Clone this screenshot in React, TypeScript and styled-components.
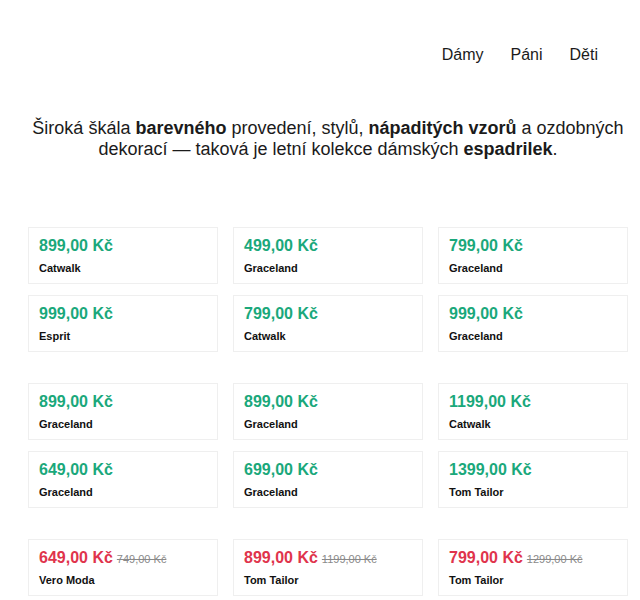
import React from "react";
import styled, { createGlobalStyle } from "styled-components";

const Global = createGlobalStyle`
  html, body { margin: 0; padding: 0; background: #fff; }
  body { font-family: "Liberation Sans", Arial, sans-serif; color: #1b1b1b; }
`;

const Page = styled.div`
  width: 600px;
  margin-left: 28px;
`;

const Nav = styled.nav`
  display: flex;
  justify-content: flex-end;
  gap: 27px;
  padding: 46px 30px 0 0;
`;

const NavLink = styled.a`
  font-size: 16px;
  line-height: 18px;
  color: #1b1b1b;
  text-decoration: none;
`;

const Intro = styled.p`
  margin: 54px 0 0;
  text-align: center;
  font-size: 18px;
  line-height: 21px;
  color: #1b1b1b;
  b { font-weight: 700; }
`;

const Groups = styled.div`
  margin-top: 67px;
  display: flex;
  flex-direction: column;
  gap: 31px;
`;

const Grid = styled.div`
  display: grid;
  grid-template-columns: repeat(3, 190px);
  column-gap: 15px;
  row-gap: 11px;
`;

const Card = styled.div`
  border: 1px solid #efefef;
  padding: 9px 10px 8px;
  display: flex;
  flex-direction: column;
  gap: 7px;
`;

const PriceRow = styled.div`
  display: flex;
  align-items: baseline;
  gap: 4px;
  height: 18px;
`;

const Price = styled.span<{ $sale?: boolean }>`
  font-size: 16px;
  line-height: 18px;
  font-weight: 700;
  color: ${(p) => (p.$sale ? "#e0344c" : "#1aa87b")};
`;

const OldPrice = styled.span`
  font-size: 11px;
  color: #8a8a8a;
  text-decoration: line-through;
`;

const Brand = styled.div`
  font-size: 11px;
  line-height: 13px;
  font-weight: 700;
  color: #111;
`;

type Item = { price: string; brand: string; old?: string };

const groups: Item[][] = [
  [
    { price: "899,00 Kč", brand: "Catwalk" },
    { price: "499,00 Kč", brand: "Graceland" },
    { price: "799,00 Kč", brand: "Graceland" },
    { price: "999,00 Kč", brand: "Esprit" },
    { price: "799,00 Kč", brand: "Catwalk" },
    { price: "999,00 Kč", brand: "Graceland" },
  ],
  [
    { price: "899,00 Kč", brand: "Graceland" },
    { price: "899,00 Kč", brand: "Graceland" },
    { price: "1199,00 Kč", brand: "Catwalk" },
    { price: "649,00 Kč", brand: "Graceland" },
    { price: "699,00 Kč", brand: "Graceland" },
    { price: "1399,00 Kč", brand: "Tom Tailor" },
  ],
  [
    { price: "649,00 Kč", brand: "Vero Moda", old: "749,00 Kč" },
    { price: "899,00 Kč", brand: "Tom Tailor", old: "1199,00 Kč" },
    { price: "799,00 Kč", brand: "Tom Tailor", old: "1299,00 Kč" },
  ],
];

export default function App() {
  return (
    <>
      <Global />
      <Page>
        <Nav>
          <NavLink href="#">Dámy</NavLink>
          <NavLink href="#">Páni</NavLink>
          <NavLink href="#">Děti</NavLink>
        </Nav>
        <Intro>
          Široká škála <b>barevného</b> provedení, stylů, <b>nápaditých vzorů</b> a ozdobných
          dekorací — taková je letní kolekce dámských <b>espadrilek</b>.
        </Intro>
        <Groups>
          {groups.map((g, gi) => (
            <Grid key={gi}>
              {g.map((it, i) => (
                <Card key={i}>
                  <PriceRow>
                    <Price $sale={!!it.old}>{it.price}</Price>
                    {it.old && <OldPrice>{it.old}</OldPrice>}
                  </PriceRow>
                  <Brand>{it.brand}</Brand>
                </Card>
              ))}
            </Grid>
          ))}
        </Groups>
      </Page>
    </>
  );
}
